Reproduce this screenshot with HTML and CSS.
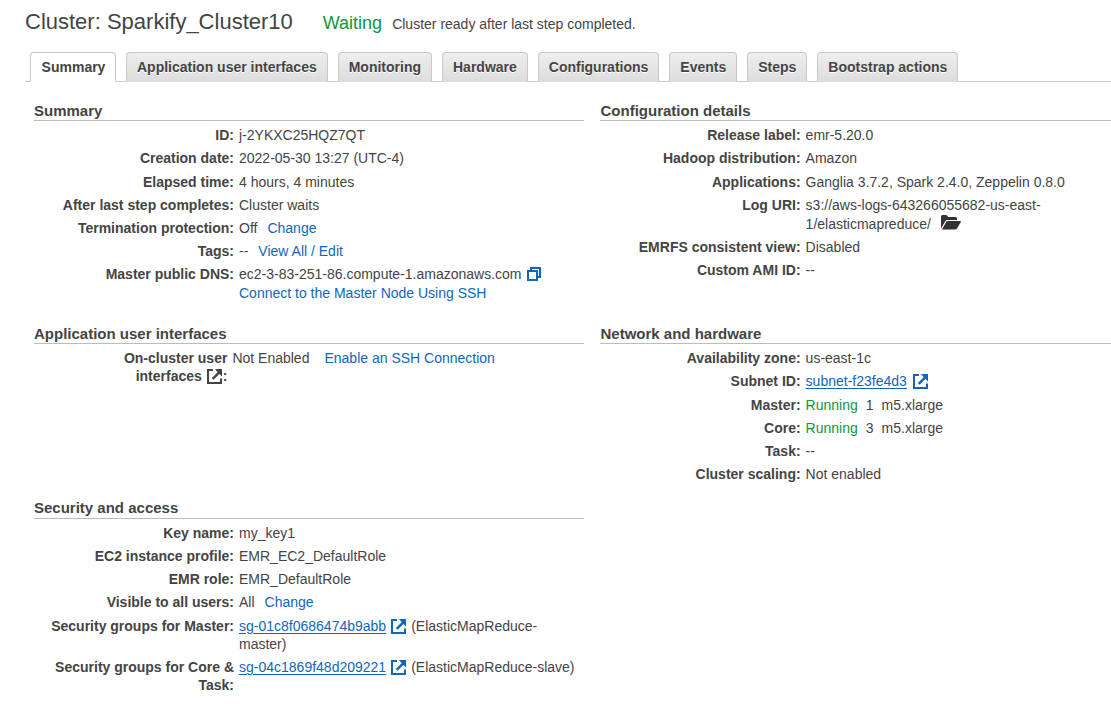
FILE: index.html
```html
<!DOCTYPE html>
<html lang="en">
<head>
<meta charset="utf-8">
<title>Cluster: Sparkify_Cluster10</title>
<link rel="stylesheet" href="styles.css">
</head>
<body>
<svg class="defs" aria-hidden="true">
  <symbol id="external" viewBox="0 0 15 15"><path d="M6 1H1v13h13V9.500" fill="none" stroke="currentColor" stroke-width="2"/><path d="M8 0h7v7.500l-2.600-2.600-5.900 5.900-1.700-1.700 5.900-5.900z" fill="currentColor"/></symbol>
  <symbol id="copy" viewBox="0 0 14 14"><path d="M4 4V1h9v9h-3M1 4h9v9H1z" fill="none" stroke="currentColor" stroke-width="2"/></symbol>
  <symbol id="folder" viewBox="0 0 20 15"><path d="M0 13.500V1.500Q0 0 1.500 0H5q1 0 1.500 1l.5 1h7.500Q16 2 16 3.500V5H6.500Q5 5 4.300 6.200z"/><path d="M1 14.500 5 7.300Q5.700 6 7 6h12.500q.8 0 .3.900l-3.600 6.400Q15.500 14.500 14 14.500z"/></symbol>
</svg>
<header class="title-bar">
  <h1>Cluster: Sparkify_Cluster10</h1>
  <span class="state">Waiting</span>
  <span class="message">Cluster ready after last step completed.</span>
</header>
<nav class="tabs">
  <a class="tab active">Summary</a>
  <a class="tab">Application user interfaces</a>
  <a class="tab">Monitoring</a>
  <a class="tab">Hardware</a>
  <a class="tab">Configurations</a>
  <a class="tab">Events</a>
  <a class="tab">Steps</a>
  <a class="tab">Bootstrap actions</a>
</nav>
<main class="panels">
  <section>
    <h2>Summary</h2>
    <dl>
      <dt>ID:</dt><dd>j-2YKXC25HQZ7QT</dd>
      <dt>Creation date:</dt><dd>2022-05-30 13:27 (UTC-4)</dd>
      <dt>Elapsed time:</dt><dd>4 hours, 4 minutes</dd>
      <dt>After last step completes:</dt><dd>Cluster waits</dd>
      <dt>Termination protection:</dt><dd>Off<a class="action">Change</a></dd>
      <dt>Tags:</dt><dd>--<a class="action">View All / Edit</a></dd>
      <dt>Master public DNS:</dt><dd>ec2-3-83-251-86.compute-1.amazonaws.com<svg class="icon copy"><use href="#copy"/></svg><a class="below">Connect to the Master Node Using SSH</a></dd>
    </dl>
  </section>
  <section class="right">
    <h2>Configuration details</h2>
    <dl>
      <dt>Release label:</dt><dd>emr-5.20.0</dd>
      <dt>Hadoop distribution:</dt><dd>Amazon</dd>
      <dt>Applications:</dt><dd>Ganglia 3.7.2, Spark 2.4.0, Zeppelin 0.8.0</dd>
      <dt>Log URI:</dt><dd>s3://aws-logs-643266055682-us-east-<div class="below path">1/elasticmapreduce/<svg class="icon folder"><use href="#folder"/></svg></div></dd>
      <dt>EMRFS consistent view:</dt><dd>Disabled</dd>
      <dt>Custom AMI ID:</dt><dd>--</dd>
    </dl>
  </section>
  <section>
    <h2>Application user interfaces</h2>
    <dl class="narrow">
      <dt>On-cluster user<br>interfaces <svg class="icon external label-icon"><use href="#external"/></svg>:</dt><dd>Not Enabled<a class="action wide">Enable an SSH Connection</a></dd>
    </dl>
  </section>
  <section class="right">
    <h2>Network and hardware</h2>
    <dl>
      <dt>Availability zone:</dt><dd>us-east-1c</dd>
      <dt>Subnet ID:</dt><dd><a class="underlined">subnet-f23fe4d3</a><svg class="icon external"><use href="#external"/></svg></dd>
      <dt>Master:</dt><dd class="nodes"><span class="running">Running</span><span>1</span><span>m5.xlarge</span></dd>
      <dt>Core:</dt><dd class="nodes"><span class="running">Running</span><span>3</span><span>m5.xlarge</span></dd>
      <dt>Task:</dt><dd>--</dd>
      <dt>Cluster scaling:</dt><dd>Not enabled</dd>
    </dl>
  </section>
  <section class="security">
    <h2>Security and access</h2>
    <dl>
      <dt>Key name:</dt><dd>my_key1</dd>
      <dt>EC2 instance profile:</dt><dd>EMR_EC2_DefaultRole</dd>
      <dt>EMR role:</dt><dd>EMR_DefaultRole</dd>
      <dt>Visible to all users:</dt><dd>All<a class="action">Change</a></dd>
      <dt>Security groups for Master:</dt><dd><a class="underlined">sg-01c8f0686474b9abb</a><svg class="icon external group"><use href="#external"/></svg>(ElasticMapReduce-<br>master)</dd>
      <dt>Security groups for Core &amp;<br>Task:</dt><dd><a class="underlined">sg-04c1869f48d209221</a><svg class="icon external group"><use href="#external"/></svg>(ElasticMapReduce-slave)</dd>
    </dl>
  </section>
</main>
</body>
</html>
```
FILE: styles.css
```css
* { box-sizing: border-box; }
body {
  margin: 0;
  background: #fff;
  color: #444;
  font: 14px/18.2px "Liberation Sans", Arial, sans-serif;
  overflow: hidden;
}
.defs { display: none; }
.title-bar {
  display: flex;
  align-items: baseline;
  height: 52px;
  padding: 9px 0 0 25px;
}
h1 { margin: 0 30px 0 0; font-size: 22px; line-height: 26px; font-weight: 400; }
.state { margin-right: 10px; font-size: 18px; color: #10963e; }
.tabs {
  display: flex;
  gap: 10px;
  height: 30px;
  margin-left: 25px;
  padding-left: 5px;
  border-bottom: 1px solid #ccc;
}
.tab {
  height: 30px;
  padding: 5px 9.8px 0 10.2px;
  border: 1px solid #c8c8c8;
  border-bottom-color: #ddd;
  border-radius: 4px 4px 0 0;
  background: linear-gradient(#eee, #ddd);
  font-weight: 700;
  text-shadow: 0 1px 0 #fff;
  white-space: nowrap;
}
.tab.active { padding: 5px 9.4px 0 10.6px; background: #fff; border-bottom-color: #fff; }
.panels {
  display: grid;
  grid-template-columns: 550px 511px;
  grid-template-rows: 223px 174.65px auto;
  column-gap: 16px;
  padding: 20px 0 0 34px;
}
h2 {
  height: 19px;
  margin: 0 0 5.15px;
  border-bottom: 1px solid #bbb;
  font-size: 15px;
  line-height: 18px;
}
.security h2 { line-height: 16.8px; }
dl {
  display: grid;
  grid-template-columns: 200px 1fr;
  gap: 5px;
  margin: 0;
}
.right dl { padding-left: 0.6px; }
.right h2 { padding-left: 0.5px; }
.narrow { grid-template-columns: 193.4px 1fr; }
dt { font-weight: 700; text-align: right; }
dd { margin: 0; white-space: nowrap; }
a { color: #1166bb; }
.tab { color: #444; }
.underlined { text-decoration: underline; text-underline-offset: 2px; }
.action { margin-left: 10px; }
.action.wide { margin-left: 15px; }
.below { display: block; margin-top: 0.6px; }
.below.path { margin-top: 1px; }
.running { color: #10963e; }
.nodes { display: flex; gap: 8px; }
.icon { fill: currentColor; margin-left: 6px; }
.external { width: 15px; height: 15px; vertical-align: -3px; color: #1166bb; }
.external.group { margin: 0 5px; }
.external.label-icon { margin: 0 1px; color: #444; }
.copy { width: 14px; height: 14px; vertical-align: -2px; color: #1166bb; }
.folder { width: 20px; height: 15px; margin: 0 0 -1px 10.5px; vertical-align: 0; color: #333; }
```
